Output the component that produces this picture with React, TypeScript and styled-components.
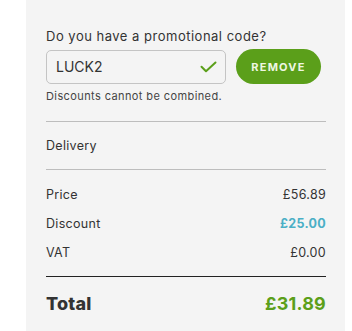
import React from "react";
import styled, { createGlobalStyle } from "styled-components";

const Global = createGlobalStyle`
  html, body { margin: 0; padding: 0; background: #ffffff; }
  body { font-family: "Inter", "Open Sans", sans-serif; color: #333333; }
`;

const Page = styled.div`
  display: flex;
  height: 331px;
  padding-left: 26px;
  background: #ffffff;
`;

const Panel = styled.div`
  width: 319px;
  box-sizing: border-box;
  background: #f4f4f4;
  padding: 28px 19px 0 20px;
  display: flex;
  flex-direction: column;
`;

const Label = styled.div`
  font-size: 13px;
  letter-spacing: 0.5px;
  line-height: 16px;
  color: #333;
  margin-bottom: 5px;
`;

const PromoRow = styled.div`
  display: flex;
  align-items: center;
  gap: 10px;
`;

const InputBox = styled.div`
  width: 180px;
  height: 34px;
  box-sizing: border-box;
  border: 1px solid #c4c4c4;
  border-radius: 5px;
  background: #f4f4f4;
  display: flex;
  align-items: center;
  justify-content: space-between;
  padding: 0 8px 0 9px;
  font-size: 14px;
  color: #333;
`;

const RemoveButton = styled.button`
  width: 85px;
  height: 35px;
  border: none;
  border-radius: 18px;
  background: #5b9f1a;
  color: #eef7e3;
  font-family: inherit;
  font-weight: 700;
  font-size: 11px;
  letter-spacing: 1.2px;
  cursor: pointer;
`;

const Hint = styled.div`
  font-size: 11px;
  letter-spacing: 0.4px;
  color: #444;
  margin-top: 5px;
  margin-bottom: 18px;
`;

const Divider = styled.div<{ $dark?: boolean }>`
  height: 1px;
  background: ${(p) => (p.$dark ? "#222" : "#bdbdbd")};
`;

const Section = styled.div<{ $pad: string }>`
  display: flex;
  flex-direction: column;
  padding: ${(p) => p.$pad};
`;

const Row = styled.div<{ $h: number }>`
  display: flex;
  justify-content: space-between;
  align-items: center;
  height: ${(p) => p.$h}px;
  font-size: 12.5px;
  letter-spacing: 0.3px;
  color: #333;
`;

const Value = styled.span<{ $color?: string; $bold?: boolean }>`
  color: ${(p) => p.$color || "#333"};
  font-weight: ${(p) => (p.$bold ? 700 : 400)};
`;

const TotalRow = styled.div`
  display: flex;
  justify-content: space-between;
  align-items: center;
  height: 56px;
  font-size: 18px;
  font-weight: 800;
  letter-spacing: 0.2px;
  color: #333;
`;

const Check = () => (
  <svg width="17" height="12" viewBox="0 0 17 12" fill="none">
    <path d="M1.5 5.8 L6 10.3 L15.5 1.5" stroke="#5b9f1a" strokeWidth="2" strokeLinecap="round" strokeLinejoin="round" />
  </svg>
);

export default function App() {
  return (
    <>
      <Global />
      <Page>
        <Panel>
          <Label>Do you have a promotional code?</Label>
          <PromoRow>
            <InputBox>
              <span>LUCK2</span>
              <Check />
            </InputBox>
            <RemoveButton>REMOVE</RemoveButton>
          </PromoRow>
          <Hint>Discounts cannot be combined.</Hint>
          <Divider />
          <Row $h={48}>Delivery</Row>
          <Divider />
          <Section $pad="10px 0 9px">
            <Row $h={29}>
              <span>Price</span>
              <Value>£56.89</Value>
            </Row>
            <Row $h={29}>
              <span>Discount</span>
              <Value $color="#4aafc6" $bold>£25.00</Value>
            </Row>
            <Row $h={29}>
              <span>VAT</span>
              <Value>£0.00</Value>
            </Row>
          </Section>
          <Divider $dark />
          <TotalRow>
            <span>Total</span>
            <Value $color="#5b9f1a" $bold>£31.89</Value>
          </TotalRow>
        </Panel>
      </Page>
    </>
  );
}
